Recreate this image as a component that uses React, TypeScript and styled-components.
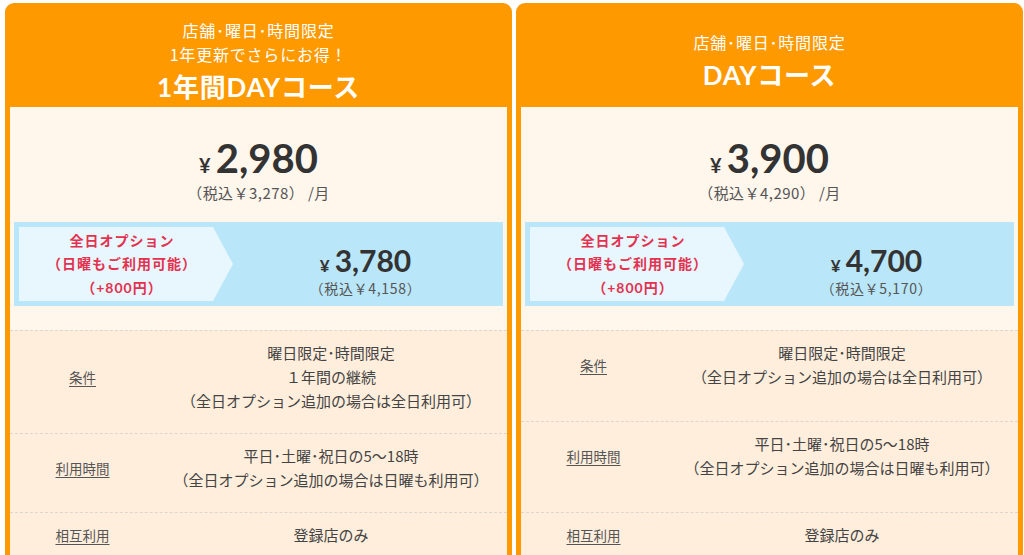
import { FC } from "react";
import styled, { createGlobalStyle } from "styled-components";

type Row = { label: string; lines: string[] };

type Plan = {
    id: string;
    subs: string[];
    title: string;
    price: string;
    tax: string;
    optionPrice: string;
    optionTax: string;
    rowPad: number;
    rows: Row[];
};

const plans: Plan[] = [
    {
        id: "year",
        subs: ["店舗･曜日･時間限定", "1年更新でさらにお得！"],
        title: "1年間DAYコース",
        price: "2,980",
        tax: "（税込￥3,278） /月",
        optionPrice: "3,780",
        optionTax: "（税込￥4,158）",
        rowPad: 20,
        rows: [
            { label: "条件", lines: ["曜日限定･時間限定", "１年間の継続", "（全日オプション追加の場合は全日利用可）"] },
            { label: "利用時間", lines: ["平日･土曜･祝日の5〜18時", "（全日オプション追加の場合は日曜も利用可）"] },
            { label: "相互利用", lines: ["登録店のみ"] },
        ],
    },
    {
        id: "day",
        subs: ["店舗･曜日･時間限定"],
        title: "DAYコース",
        price: "3,900",
        tax: "（税込￥4,290） /月",
        optionPrice: "4,700",
        optionTax: "（税込￥5,170）",
        rowPad: 32,
        rows: [
            { label: "条件", lines: ["曜日限定･時間限定", "（全日オプション追加の場合は全日利用可）"] },
            { label: "利用時間", lines: ["平日･土曜･祝日の5〜18時", "（全日オプション追加の場合は日曜も利用可）"] },
            { label: "相互利用", lines: ["登録店のみ"] },
        ],
    },
];

const App: FC = () => {
    return (
        <>
            <GlobalStyle />
            <Page>
                {plans.map((plan) => (
                    <Card key={plan.id}>
                        <Header>
                            {plan.subs.map((s) => (
                                <Sub key={s}>{s}</Sub>
                            ))}
                            <Title>{plan.title}</Title>
                        </Header>
                        <Body>
                            <PriceBlock>
                                <Price>
                                    <Yen>¥</Yen>
                                    <Amount>{plan.price}</Amount>
                                </Price>
                                <Tax>{plan.tax}</Tax>
                            </PriceBlock>
                            <OptionBox>
                                <OptionLabel>
                                    <span>全日オプション</span>
                                    <span>（日曜もご利用可能）</span>
                                    <span>（+800円）</span>
                                </OptionLabel>
                                <OptionPrice>
                                    <Price>
                                        <Yen $small>¥</Yen>
                                        <Amount $small>{plan.optionPrice}</Amount>
                                    </Price>
                                    <OptionTax>{plan.optionTax}</OptionTax>
                                </OptionPrice>
                            </OptionBox>
                            <Rows>
                                {plan.rows.map((row) => (
                                    <RowItem key={row.label} $pb={plan.rowPad}>
                                        <Label>{row.label}</Label>
                                        <Value>
                                            {row.lines.map((l) => (
                                                <div key={l}>{l}</div>
                                            ))}
                                        </Value>
                                    </RowItem>
                                ))}
                            </Rows>
                        </Body>
                    </Card>
                ))}
            </Page>
        </>
    );
};

const GlobalStyle = createGlobalStyle`
  html, body {
    margin: 0;
    padding: 0;
    overflow: hidden;
    background: #fff;
  }
  body {
    font-family: "Noto Sans CJK JP", "Noto Sans", sans-serif;
    color: #444;
  }
`;

const Page = styled.div`
  display: flex;
  gap: 4px;
  padding: 3px 1px 0 5px;
  align-items: flex-start;
`;

const Card = styled.div`
  width: 507px;
  background: #ff9900;
  border-radius: 9px 9px 0 0;
  padding: 0 5px;
  box-sizing: border-box;
  display: flex;
  flex-direction: column;
`;

const Header = styled.div`
  height: 104px;
  box-sizing: border-box;
  padding-top: 14px;
  display: flex;
  flex-direction: column;
  align-items: center;
  justify-content: center;
  color: #fff;
`;

const Sub = styled.div`
  font-size: 16px;
  line-height: 24px;
  letter-spacing: 0.05em;
`;

const Title = styled.div`
  font-family: "Lato", "Noto Sans CJK JP", sans-serif;
  font-size: 26px;
  font-weight: 700;
  line-height: 39px;
  letter-spacing: 0.03em;
  margin-top: 2px;
`;

const Body = styled.div`
  background: #fff6ec;
`;

const PriceBlock = styled.div`
  padding-top: 27px;
  text-align: center;
`;

const Price = styled.div`
  display: flex;
  justify-content: center;
  align-items: baseline;
  color: #333;
`;

const Yen = styled.span<{ $small?: boolean }>`
  font-family: "Lato", sans-serif;
  font-weight: 700;
  font-size: ${(p) => (p.$small ? "17px" : "20px")};
  margin-right: 5px;
`;

const Amount = styled.span<{ $small?: boolean }>`
  font-family: "Lato", sans-serif;
  font-weight: 700;
  font-size: ${(p) => (p.$small ? "30px" : "40px")};
  line-height: ${(p) => (p.$small ? "34px" : "48px")};
`;

const Tax = styled.div`
  font-size: 15px;
  line-height: 22px;
  letter-spacing: 0.03em;
  color: #555;
`;

const OptionBox = styled.div`
  margin: 18px 4px 24px;
  padding: 5px;
  background: #bae6f9;
  display: flex;
  height: 84px;
  box-sizing: border-box;
`;

const OptionLabel = styled.div`
  width: 214px;
  background: #e8f6fd;
  clip-path: polygon(0 0, calc(100% - 20px) 0, 100% 50%, calc(100% - 20px) 100%, 0 100%);
  display: flex;
  flex-direction: column;
  align-items: center;
  justify-content: center;
  padding-right: 8px;
  box-sizing: border-box;
  color: #e3324f;
  font-weight: 700;
  font-size: 14px;
  line-height: 23.5px;
  letter-spacing: 1px;
  font-family: "Lato", "Noto Sans CJK JP", sans-serif;
`;

const OptionPrice = styled.div`
  flex: 1;
  display: flex;
  flex-direction: column;
  justify-content: center;
  align-items: center;
  padding-top: 14px;
`;

const OptionTax = styled.div`
  font-size: 14px;
  line-height: 22px;
  letter-spacing: 0.05em;
  color: #555;
`;

const Rows = styled.div`
  background: #ffeedc;
`;

const RowItem = styled.div<{ $pb: number }>`
  display: flex;
  align-items: center;
  border-top: 1px dashed #ddd6cf;
  padding: 10px 0 ${(p) => p.$pb}px;
`;

const Label = styled.div`
  width: 145px;
  flex-shrink: 0;
  text-align: center;
  font-size: 13.5px;
  color: #555;
  text-decoration: underline;
  text-underline-offset: 3px;
`;

const Value = styled.div`
  flex: 1;
  text-align: center;
  font-size: 15px;
  line-height: 24px;
  color: #444;
`;

export default App;
